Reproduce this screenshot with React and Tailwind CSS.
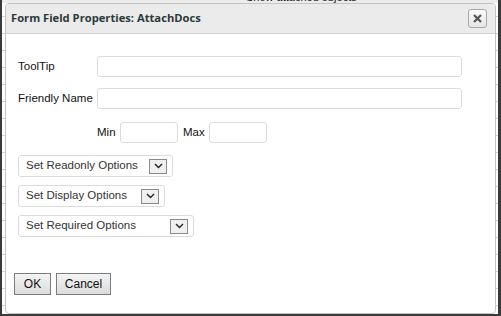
import React from "react";

function Chevron() {
  return (
    <svg width="9" height="6" viewBox="0 0 9 6" className="block">
      <path d="M1 1 L4.5 4.5 L8 1" fill="none" stroke="#222" strokeWidth="1.4" />
    </svg>
  );
}

function SelectBox({ label, width }) {
  return (
    <div
      className="flex h-[22px] items-center justify-between rounded-[3px] border border-[#dcdcdc] bg-white pl-[7px] pr-[5px]"
      style={{ width }}
    >
      <span className="text-[11.5px] text-[#333]">{label}</span>
      <span className="flex h-[15px] w-[18px] items-center justify-center border border-[#8a8a8a] bg-[#f0f0f0]">
        <Chevron />
      </span>
    </div>
  );
}

export default function App() {
  return (
    <div
      className="relative h-[316px] w-[501px] overflow-hidden border-l-[2px] border-r-[3px] border-b-[2px] border-[#3a3a3a] bg-white bg-[repeating-linear-gradient(to_bottom,transparent_0px,transparent_16px,#c9d1dd_16px,#c9d1dd_17px)]"
      style={{ fontFamily: '"Liberation Sans", Arial, sans-serif' }}
    >
      <div className="absolute left-0 top-0 h-[3px] w-full bg-[#ececec]" />
      <div className="absolute left-[230px] top-0 h-[3px] w-[130px] overflow-hidden bg-[#ececec]">
        <div className="mt-[-9px] pl-[14px] text-[11px] leading-[12px] text-[#222]">Show attached objects</div>
      </div>
      <div className="absolute left-[3px] top-[3px] flex h-[311px] w-[491px] flex-col overflow-hidden rounded-[4px] border border-[#c4c4c4] bg-white">
        <div className="flex h-[30px] shrink-0 items-center justify-between border-b border-[#d3d3d3] bg-[#ebebeb] pl-[5px] pr-[8px]">
          <span
            className="text-[11.2px] font-bold text-[#2b3a3a]"
            style={{ fontFamily: '"Open Sans", "Liberation Sans", sans-serif' }}
          >
            Form Field Properties: AttachDocs
          </span>
          <span className="flex h-[19px] w-[19px] items-center justify-center rounded-[3px] border border-[#a8a8a8] bg-gradient-to-b from-[#fafafa] to-[#e6e6e6]">
            <svg width="11" height="11" viewBox="0 0 11 11">
              <path d="M2 2 L9 9 M9 2 L2 9" stroke="#555" strokeWidth="2.2" />
            </svg>
          </span>
        </div>
        <div className="flex flex-1 flex-col pl-[12px] pt-[22px]">
          <div className="flex items-center">
            <span className="w-[79px] text-[11.5px] text-[#111]">ToolTip</span>
            <div className="h-[21px] w-[365px] rounded-[3px] border border-[#dcdcdc]" />
          </div>
          <div className="mt-[11px] flex items-center">
            <span className="w-[79px] text-[11.5px] text-[#111]">Friendly Name</span>
            <div className="h-[21px] w-[365px] rounded-[3px] border border-[#dcdcdc]" />
          </div>
          <div className="mt-[13px] flex items-center pl-[79px]">
            <span className="w-[23px] text-[11.5px] text-[#111]">Min</span>
            <div className="h-[21px] w-[58px] rounded-[3px] border border-[#dcdcdc]" />
            <span className="ml-[5px] w-[26px] text-[11.5px] text-[#111]">Max</span>
            <div className="h-[21px] w-[58px] rounded-[3px] border border-[#dcdcdc]" />
          </div>
          <div className="mt-[12px] flex flex-col gap-[8px]">
            <SelectBox label="Set Readonly Options" width={155} />
            <SelectBox label="Set Display Options" width={147} />
            <SelectBox label="Set Required Options" width={176} />
          </div>
          <div className="mt-[36px] flex gap-[5px]">
            <button className="-ml-[4px] h-[22px] w-[37px] border border-[#7c7c7c] bg-gradient-to-b from-[#f4f4f4] to-[#dcdcdc] text-[12px] text-[#111]">
              OK
            </button>
            <button className="h-[22px] w-[55px] border border-[#7c7c7c] bg-gradient-to-b from-[#f4f4f4] to-[#dcdcdc] text-[12px] text-[#111]">
              Cancel
            </button>
          </div>
        </div>
      </div>
    </div>
  );
}
